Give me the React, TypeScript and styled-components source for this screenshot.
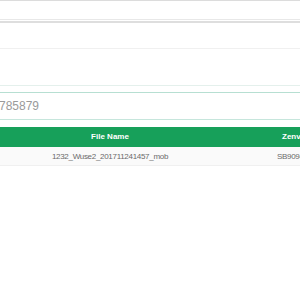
import * as React from 'react';
import styled, { createGlobalStyle } from 'styled-components';

const Global = createGlobalStyle`
  html, body {
    margin: 0;
    padding: 0;
    background: #ffffff;
    font-family: "Liberation Sans", Arial, sans-serif;
  }
  #root {
    width: 300px;
    height: 300px;
    overflow: hidden;
  }
`;

const Page = styled.div`
  width: 300px;
  height: 300px;
  overflow: hidden;
  background: #fff;
  border-top: 1px solid #dcdcdc;
  box-sizing: border-box;
`;

const TopBar = styled.div`
  height: 18px;
  border-bottom: 1px solid #e8e8e8;
`;

const Heading = styled.div`
  height: 25px;
  border-top: 2px solid #dedede;
  margin-top: 1px;
  border-bottom: 1px solid #f0f0f0;
`;

const FilterArea = styled.div`
  height: 36px;
  border-bottom: 1px solid #e4f0ec;
`;

const SearchWrap = styled.div`
  padding: 6px 0 7px;
`;

const SearchInput = styled.div`
  height: 26px;
  border-top: 1px solid #b7dfd2;
  border-bottom: 1px solid #c6e6dc;
  display: flex;
  align-items: center;
  font-size: 12px;
  color: #9a9a9a;
  text-indent: -1px;
  white-space: nowrap;
`;

const Table = styled.div`
  display: grid;
  grid-template-columns: 40px 140px 1fr;
`;

const HeadCell = styled.div<{ $pad?: number }>`
  background: #17a05a;
  color: #fff;
  font-weight: bold;
  font-size: 8px;
  height: 20px;
  line-height: 20px;
  white-space: nowrap;
  overflow: hidden;
  text-align: ${(p) => (p.$pad !== undefined ? 'left' : 'center')};
  padding-left: ${(p) => p.$pad ?? 0}px;
`;

const Cell = styled.div<{ $pad?: number }>`
  background: #fafafa;
  color: #6a6a6a;
  font-size: 8px;
  letter-spacing: -0.3px;
  height: 18px;
  line-height: 19px;
  border-bottom: 1px solid #f0f0f0;
  white-space: nowrap;
  overflow: hidden;
  text-align: ${(p) => (p.$pad !== undefined ? 'left' : 'center')};
  padding-left: ${(p) => p.$pad ?? 0}px;
`;

export default function App() {
  return (
    <>
      <Global />
      <Page>
        <TopBar />
        <Heading />
        <FilterArea />
        <SearchWrap>
          <SearchInput>785879</SearchInput>
        </SearchWrap>
        <Table>
          <HeadCell />
          <HeadCell>File Name</HeadCell>
          <HeadCell $pad={102}>Zenvoice No</HeadCell>
          <Cell />
          <Cell>1232_Wuse2_201711241457_mob</Cell>
          <Cell $pad={97}>SB9094512</Cell>
        </Table>
      </Page>
    </>
  );
}
